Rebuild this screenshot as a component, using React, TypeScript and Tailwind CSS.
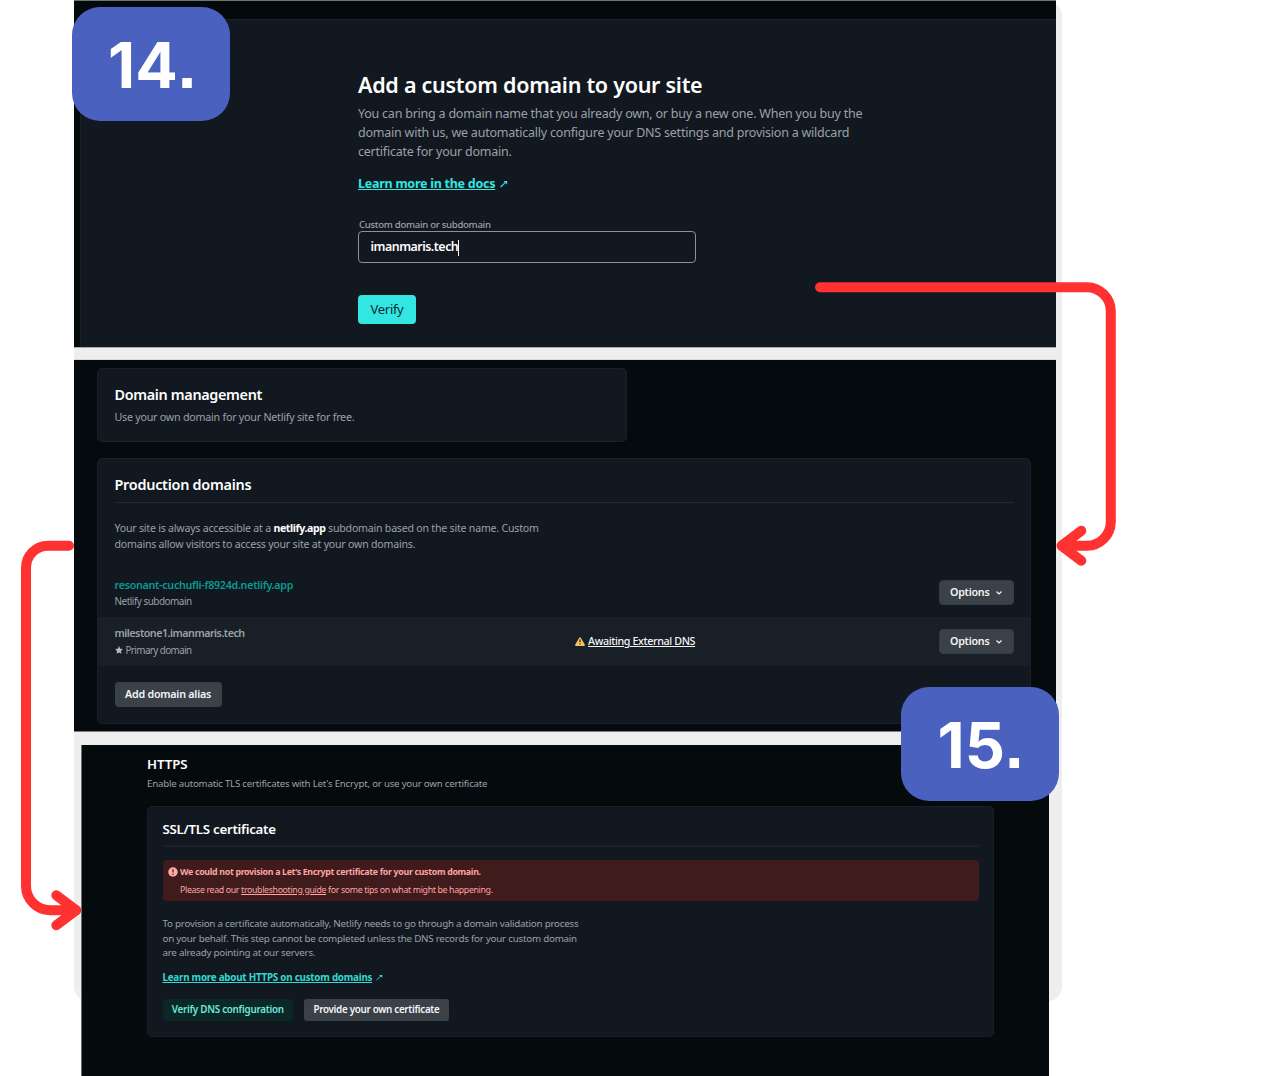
import React from "react";

const ExternalArrow = ({ className }: { className: string }) => (
  <svg viewBox="0 0 8 8" className={className} fill="none" stroke="currentColor" strokeWidth="1.1">
    <path d="M0.6 7 L6 1.8" />
    <path d="M3.4 1 H7.2 V4.4 Z" fill="currentColor" stroke="none" />
  </svg>
);

const OptionsButton = () => (
  <button className="flex h-[25px] w-[75px] items-center rounded-[4px] border border-[#343b44] bg-[#3a4149] pb-px pl-[10.5px] text-[10.7px] font-semibold tracking-[-0.25px] text-[#f4f5f6]">
    <span className="w-[45.5px] text-left">Options</span>
    <svg viewBox="0 0 6 4" className="mt-px h-[4px] w-[6px]" fill="none" stroke="currentColor" strokeWidth="1.3">
      <path d="M0.5 0.6 L3 2.9 L5.5 0.6" />
    </svg>
  </button>
);

const StepBadge = ({ step, className }: { step: string; className: string }) => (
  <div
    className={`absolute flex h-[113.5px] w-[158px] items-baseline rounded-[28px] bg-[#4a61c0] pl-[36.5px] font-[Inter,sans-serif] text-[63px] leading-[116px] font-bold text-white ${className}`}
  >
    {step}
    <span className="font-['Liberation_Sans',Arial,sans-serif] text-[67px]">.</span>
  </div>
);

const CustomDomainPanel = () => (
  <section className="h-[346px] bg-[#04090c] pt-[18px] pl-[6px]">
    <div className="h-[328px] border-t border-l border-[#1a2029] bg-[#12181f] pt-[51px] pl-[277px]">
      <h1 className="h-[33px] text-[21.5px] leading-[28px] font-semibold tracking-[-0.27px] text-white">
        Add a custom domain to your site
      </h1>
      <p className="h-[70px] text-[12.5px] leading-[19.2px] tracking-[-0.225px] text-[#9aa1a9]">
        You can bring a domain name that you already own, or buy a new one. When you buy the
        <br />
        domain with us, we automatically configure your DNS settings and provision a wildcard
        <br />
        certificate for your domain.
      </p>
      <div className="flex h-[44px] items-start text-[#32e6e2]">
        <a className="text-[12.5px] leading-[19px] font-bold tracking-[-0.25px] underline">Learn more in the docs</a>
        <ExternalArrow className="mt-[6px] ml-[5px] h-[8px] w-[8px]" />
      </div>
      <label className="block h-[13px] pl-[1px] text-[9.6px] leading-[14px] font-medium tracking-[-0.3px] text-[#9aa1a9]">
        Custom domain or subdomain
      </label>
      <div className="flex h-[32px] w-[338px] items-center rounded-[4px] border border-[#8b929c] pt-px pl-[11.5px] text-[12.4px] font-semibold tracking-[-0.48px] text-white">
        <span>imanmaris.tech</span>
        <span className="h-[16px] w-px bg-white" />
      </div>
      <button className="mt-[32px] flex h-[29px] w-[58px] items-center justify-center rounded-[4px] bg-[#32e6e2] text-[13px] tracking-[-0.3px] text-[#0c2b30]">
        <span>Verify</span>
      </button>
    </div>
  </section>
);

const DomainPanel = () => (
  <section className="h-[371px] bg-[#050a0e] pt-[8px] pl-[23px]">
    <div className="h-[74px] w-[530px] rounded-[5px] border border-[#1a2028] bg-[#12181f] pt-[16px] pl-[16.5px]">
      <h2 className="text-[14.4px] leading-[20px] font-semibold tracking-[-0.33px] text-white">Domain management</h2>
      <p className="mt-[4px] text-[10.7px] leading-[16px] tracking-[-0.235px] text-[#9aa1a9]">
        Use your own domain for your Netlify site for free.
      </p>
    </div>
    <div className="mt-[16px] h-[266px] w-[934px] rounded-[5px] border border-[#1a2028] bg-[#12181f] pt-[16px]">
      <div className="mx-[16.5px] h-[28px] border-b border-[#242b35]">
        <h2 className="text-[14.4px] leading-[20px] font-semibold tracking-[-0.25px] text-white">Production domains</h2>
      </div>
      <p className="mt-[17px] h-[48px] pl-[16.5px] text-[10.6px] leading-[16.4px] tracking-[-0.22px] text-[#9aa1a9]">
        Your site is always accessible at a <b className="font-bold tracking-[-0.4px] text-white">netlify.app</b> subdomain
        based on the site name. Custom
        <br />
        domains allow visitors to access your site at your own domains.
      </p>
      <div className="flex h-[49px] items-center justify-between px-[16.5px]">
        <div>
          <p className="text-[10.7px] leading-[17px] font-semibold tracking-[-0.27px] text-[#0a9a94]">
            resonant-cuchufli-f8924d.netlify.app
          </p>
          <p className="text-[9.9px] leading-[15px] tracking-[-0.47px] text-[#9aa1a9]">Netlify subdomain</p>
        </div>
        <OptionsButton />
      </div>
      <div className="flex h-[49px] items-center bg-[#191f26] px-[16.5px]">
        <div className="w-[460px] pb-px">
          <p className="text-[10.7px] leading-[17px] font-semibold tracking-[-0.49px] text-[#9aa1a9]">milestone1.imanmaris.tech</p>
          <p className="flex items-center text-[9.9px] leading-[16px] tracking-[-0.6px] text-[#9aa1a9]">
            <svg viewBox="0 0 24 24" className="mr-[3px] h-[8px] w-[8px]" fill="#b4bac1">
              <path d="M12 0 L15.6 8 L24 9 L17.8 14.9 L19.4 23.5 L12 19.2 L4.6 23.5 L6.2 14.9 L0 9 L8.4 8 Z" />
            </svg>
            <span>Primary domain</span>
          </p>
        </div>
        <div className="flex flex-1 items-center pb-px">
          <svg viewBox="0 0 20 18" className="mr-[3.5px] h-[9px] w-[10px]">
            <path d="M10 2.5 L18 16 H2 Z" fill="#f3c35c" stroke="#f3c35c" strokeWidth="3.6" strokeLinejoin="round" />
            <path d="M10 5 V10.5" stroke="#191f26" strokeWidth="2.4" />
            <circle cx="10" cy="13.8" r="1.4" fill="#191f26" />
          </svg>
          <a className="text-[10.7px] leading-[16px] font-medium tracking-[-0.36px] text-[#f4f5f6] underline">
            Awaiting External DNS
          </a>
        </div>
        <OptionsButton />
      </div>
      <button className="mt-[16px] ml-[16.5px] flex h-[25px] w-[107px] items-center justify-center rounded-[4px] bg-[#3a4149] pb-px text-[10.7px] font-semibold tracking-[-0.22px] text-[#f4f5f6]">
        <span>Add domain alias</span>
      </button>
    </div>
  </section>
);

const HttpsPanel = () => (
  <section className="ml-[7px] h-[331px] w-[968px] border-l border-[#6c7173] bg-[#050a0d] pt-[10px] pl-[65px]">
    <h2 className="text-[13.3px] leading-[19px] font-semibold tracking-[-0.1px] text-white">HTTPS</h2>
    <p className="mt-[2px] text-[9.7px] leading-[16px] tracking-[-0.22px] text-[#9aa1a9]">
      Enable automatic TLS certificates with Let's Encrypt, or use your own certificate
    </p>
    <div className="mt-[14px] h-[231px] w-[847px] rounded-[5px] border border-[#191e27] bg-[#12181f] px-[14.5px] pt-[12px]">
      <div className="h-[28px] border-b-2 border-[#1b2129]">
        <h3 className="text-[13.3px] leading-[20px] font-semibold tracking-[-0.28px] text-white">SSL/TLS certificate</h3>
      </div>
      <div className="mt-[13px] flex h-[41px] rounded-[4px] bg-[#3f1b1b] pt-[3px] pl-[5px] text-[8.8px] leading-[18px] text-[#fca5a5]">
        <svg viewBox="0 0 20 20" className="mt-[4px] mr-[2.5px] h-[10px] w-[10px]">
          <circle cx="10" cy="10" r="9.5" fill="#fcaaaa" />
          <path d="M10 4.5 V11" stroke="#3f1b1b" strokeWidth="2.4" />
          <circle cx="10" cy="14.4" r="1.5" fill="#3f1b1b" />
        </svg>
        <div>
          <p className="font-bold tracking-[-0.31px]">We could not provision a Let’s Encrypt certificate for your custom domain.</p>
          <p className="tracking-[-0.35px]">
            Please read our <a className="underline">troubleshooting guide</a> for some tips on what might be happening.
          </p>
        </div>
      </div>
      <p className="mt-[16px] h-[53px] text-[9.8px] leading-[14.7px] tracking-[-0.24px] text-[#9aa1a9]">
        To provision a certificate automatically, Netlify needs to go through a domain validation process
        <br />
        on your behalf. This step cannot be completed unless the DNS records for your custom domain
        <br />
        are already pointing at our servers.
      </p>
      <div className="flex h-[29px] items-start text-[#32d9d2]">
        <a className="text-[9.8px] leading-[16px] font-bold tracking-[-0.23px] underline">
          Learn more about HTTPS on custom domains
        </a>
        <ExternalArrow className="mt-[4px] ml-[4px] h-[7px] w-[7px]" />
      </div>
      <div className="flex gap-[11px] text-[9.8px] font-semibold">
        <button className="flex h-[22px] w-[130.5px] items-center justify-center rounded-[3px] bg-[#0b2726] pt-[1.5px] tracking-[-0.25px] text-[#6ee7dc]">
          <span>Verify DNS configuration</span>
        </button>
        <button className="flex h-[22px] w-[145px] items-center justify-center rounded-[3px] bg-[#3a4149] pt-[1.5px] tracking-[-0.29px] text-[#f4f5f6]">
          <span>Provide your own certificate</span>
        </button>
      </div>
    </div>
  </section>
);

export default function App() {
  return (
    <div className="relative h-[1076px] w-[1267px] overflow-hidden bg-white font-['Noto_Sans',sans-serif] whitespace-nowrap">
      <div className="absolute top-0 left-[74px] h-[1002px] w-[988px] rounded-[16px] bg-[#eeeeee]" />
      <main className="relative ml-[74px] flex w-[982px] flex-col border-t border-[#6c7477]">
        <CustomDomainPanel />
        <div className="h-[13px] border-t border-b border-t-[#a9aaae] border-b-[#d8dada]" />
        <DomainPanel />
        <div className="h-[14px] border-t border-[#7c7c80]" />
        <HttpsPanel />
      </main>
      <StepBadge step="14" className="top-[7px] left-[71.5px]" />
      <StepBadge step="15" className="top-[687px] left-[901px]" />
      <svg
        className="absolute inset-0 h-[1076px] w-[1267px]"
        viewBox="0 0 1267 1076"
        fill="none"
        stroke="#ff3131"
        strokeWidth="10"
        strokeLinecap="round"
        strokeLinejoin="round"
      >
        <path d="M820 287.2 H1087 A24 24 0 0 1 1110.8 311 V522 A24 24 0 0 1 1087 545.7 H1062" />
        <path d="M1081.3 530.7 L1061.5 545.7 L1081.3 560.7" />
        <path d="M69 545.7 H48 A22 22 0 0 0 26 568 V886 A24.4 24.4 0 0 0 50 910.3 H76" />
        <path d="M56.3 895.3 L76.2 910.3 L56.3 925.3" />
      </svg>
    </div>
  );
}
